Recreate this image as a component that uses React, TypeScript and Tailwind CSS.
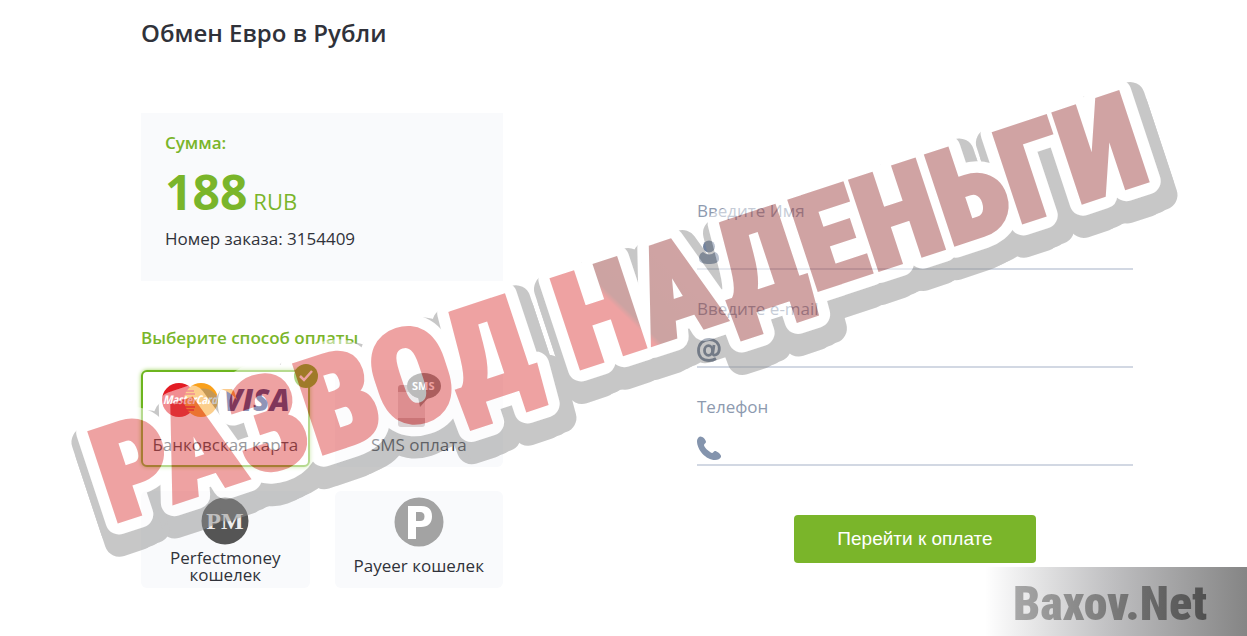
import type { ReactNode } from "react";

const narrow = "font-['Roboto_Condensed','Roboto',sans-serif] font-black";

function CardLogos() {
  return (
    <svg width="136" height="36" viewBox="0 0 136 36" aria-hidden="true">
      <circle cx="22" cy="18" r="17" fill="#e31b23" />
      <circle cx="44" cy="18" r="17" fill="#f9a01b" />
      <path d="M28 9h9M27 12h11M27 25h11M28 28h9" stroke="#e31b23" strokeWidth="1.5" />
      <text x="6" y="22" fontSize="12" fill="#fff" className="font-['Open_Sans_Condensed','Open_Sans',sans-serif] font-bold italic">MasterCard</text>
      <text x="67" y="29" fontSize="30" fill="#20286e" className="font-['Open_Sans',sans-serif] font-extrabold italic">VISA</text>
      <path d="M64 7h9q4 0 5 5l2 6q-6-8-16-11z" fill="#f79a1f" />
    </svg>
  );
}

function SmsLogo() {
  return (
    <svg width="44" height="56" viewBox="0 0 44 56" aria-hidden="true">
      <rect x="1" y="13" width="27" height="42" rx="3" fill="#b5a5a9" />
      <rect x="1" y="20" width="27" height="26" fill="#dcd8dc" />
      <ellipse cx="27" cy="14" rx="17" ry="13" fill="#777" />
      <path d="M21 25h11l-9 10z" fill="#777" />
      <text x="15" y="18" fontSize="11" fill="#fff" className="font-['Open_Sans',sans-serif] font-bold">SMS</text>
    </svg>
  );
}

function PerfectMoneyLogo() {
  return (
    <svg width="48" height="48" viewBox="0 0 48 48" aria-hidden="true">
      <circle cx="24" cy="24" r="23.5" fill="#555" />
      <text x="24" y="32" fontSize="24" textAnchor="middle" fill="#eee" className="font-['Liberation_Serif',serif] font-bold">PM</text>
    </svg>
  );
}

function PayeerLogo() {
  return (
    <svg width="50" height="50" viewBox="0 0 50 50" aria-hidden="true">
      <circle cx="25" cy="25" r="24.5" fill="#a3a3a3" />
      <path fillRule="evenodd" d="M14 9h13c8 0 11 4 11 10.500s-4 10.500-11 10.500h-5v12h-8zM22 15v9h4c3 0 4.500-1.500 4.500-4.500S29 15 26 15z" fill="#fff" />
    </svg>
  );
}

function Method({ logo, children, checked = false }: { logo: ReactNode; children: ReactNode; checked?: boolean }) {
  return (
    <label
      className={
        "relative flex h-[97px] cursor-pointer flex-col items-center rounded-md text-center text-[17px] leading-[17px] text-[#30323a] " +
        (checked ? "border-2 border-[#6db51f] bg-white shadow-[0_0_4px_#9bd35a]" : "border-2 border-transparent bg-[#f9fafc]")
      }
    >
      <input type="radio" name="method" defaultChecked={checked} className="sr-only" />
      {logo}
      {children}
      {checked && (
        <svg className="absolute -top-2 -right-2.5" width="24" height="24" viewBox="0 0 24 24" aria-hidden="true">
          <circle cx="12" cy="12" r="12" fill="#5fae0a" />
          <path d="M6 12l4 4 8-9" fill="none" stroke="#fff" strokeWidth="2.5" />
        </svg>
      )}
    </label>
  );
}

function Field({ id, label, type, icon }: { id: string; label: string; type: string; icon: ReactNode }) {
  return (
    <div className="h-[98px]">
      <label htmlFor={id} className="block text-[17px] leading-6 text-[#8d9aaf]">{label}</label>
      <div className="mt-3 flex h-[35px] items-center border-b-2 border-[#d2d8e3]">
        {icon}
        <input id={id} type={type} className="h-full min-w-0 flex-1 bg-transparent px-3 text-[17px] text-[#30323a] outline-none" />
      </div>
    </div>
  );
}

function Stamp() {
  return (
    <svg className="pointer-events-none absolute top-0 left-0" width="1247" height="636" viewBox="0 0 1247 636" role="img" aria-label="Развод на деньги">
      <defs>
        <linearGradient id="ink" gradientUnits="userSpaceOnUse" x1="488" y1="-40" x2="620" y2="-110">
          <stop offset="0.36" stopColor="#df4747" />
          <stop offset="0.4" stopColor="#9a4a47" />
          <stop offset="1" stopColor="#a34a4a" />
        </linearGradient>
        <g id="words" fontSize="131" className={narrow}>
          <text x="0" y="0">РАЗВОД</text>
          <text x="487" y="0">НА</text>
          <text x="652" y="0">ДЕНЬГИ</text>
        </g>
      </defs>
      <g opacity="0.5" transform="translate(113 523) rotate(-18.3)" strokeLinejoin="round">
        <g fill="#919191" stroke="#919191" strokeWidth="30">
          <use href="#words" x="-6" y="8" />
          <use href="#words" x="-6" y="20" />
          <use href="#words" x="10" y="18" />
          <use href="#words" x="10" y="8" />
          <use href="#words" x="2" y="19" />
        </g>
        <use href="#words" fill="#fff" stroke="#fff" strokeWidth="27" />
        <use href="#words" fill="url(#ink)" stroke="url(#ink)" strokeWidth="4" strokeLinejoin="miter" />
      </g>
    </svg>
  );
}

export default function App() {
  return (
    <div className="relative overflow-hidden bg-white font-['Open_Sans','Noto_Sans',sans-serif] text-[#30323a]">
      <main className="pt-4 pr-[114px] pb-12 pl-[141px]">
        <h1 className="text-2xl leading-[34px] font-semibold">Обмен Евро в Рубли</h1>
        <div className="mt-[63px] grid grid-cols-[362fr_436fr] gap-x-[194px]">
          <div>
            <section className="h-[168px] bg-[#f9fafc] px-6 pt-[18px]">
              <p className="text-[17px] leading-6 font-semibold text-[#7ab52a]">Сумма:</p>
              <p className="mt-[7px] flex items-baseline gap-1.5 text-[#7ab52a]">
                <span className="text-5xl leading-[60px] font-bold">188</span>
                <span className="text-[22px]">RUB</span>
              </p>
              <p className="mt-[5px] text-[17px] leading-6">Номер заказа: 3154409</p>
            </section>
            <h2 className="mt-[45px] text-[17px] leading-6 font-semibold text-[#7ab52a]">Выберите способ оплаты</h2>
            <div className="mt-5 grid grid-cols-2 gap-x-[25px] gap-y-6">
              <Method checked logo={<div className="mt-[10px] mb-[18px]"><CardLogos /></div>}>Банковская карта</Method>
              <Method logo={<div className="mb-2"><SmsLogo /></div>}>SMS оплата</Method>
              <Method logo={<div className="mt-1 mb-1"><PerfectMoneyLogo /></div>}>Perfectmoney кошелек</Method>
              <Method logo={<div className="mt-1 mb-[10px]"><PayeerLogo /></div>}>Payeer кошелек</Method>
            </div>
          </div>
          <form className="flex flex-col pt-[86px]">
            <Field id="name" label="Введите Имя" type="text" icon={
              <svg width="24" height="24" viewBox="0 0 24 24" fill="#72839f" aria-hidden="true">
                <circle cx="12" cy="6.5" r="6" />
                <path d="M6 12q6 5 12 0c3 1 4 4 4 7 0 4-5 5-10 5S2 23 2 19c0-3 1-6 4-7z" />
              </svg>
            } />
            <Field id="email" label="Введите e-mail" type="email" icon={
              <svg width="24" height="24" viewBox="0 0 24 24" aria-hidden="true">
                <g fill="none" stroke="#56657d" strokeWidth="2.8">
                  <ellipse cx="11.5" cy="12.5" rx="4" ry="4.8" />
                  <path d="M17 7l-1.200 8c-.3 4 6.500 2 6.500-4C22.300 5 18 1.500 12.500 1.500 6 1.500 1.500 6 1.500 12.500S6 22.500 12 22.500c3 0 5-.7 7-2" />
                </g>
              </svg>
            } />
            <Field id="phone" label="Телефон" type="tel" icon={
              <svg width="24" height="24" viewBox="0 0 24 24" fill="#8494ad" aria-hidden="true">
                <path d="M2 1C4-1 9 3 9 6c0 1-2 2-2 3 0 2 5 7 8 8 1 0 2-2 3-2 2 0 7 4 6 6-1 2-3 3-6 3C9 24 0 14 0 5c0-2 1-3 2-4z" />
              </svg>
            } />
            <button type="button" className="mt-[22px] h-12 w-[242px] self-center rounded bg-[#7ab52a] font-['Liberation_Sans',sans-serif] text-[19px] text-white">
              Перейти к оплате
            </button>
          </form>
        </div>
      </main>
      <Stamp />
      <div className="absolute right-0 bottom-0 flex h-[69px] w-[262px] items-center justify-center bg-linear-to-r from-white via-[#bdbdbf] to-[#858585] pt-1 pr-3">
        <span className={narrow + " bg-linear-to-r from-[#a8a8a8] to-[#505050] bg-clip-text text-5xl text-transparent"}>Baxov.Net</span>
      </div>
    </div>
  );
}
